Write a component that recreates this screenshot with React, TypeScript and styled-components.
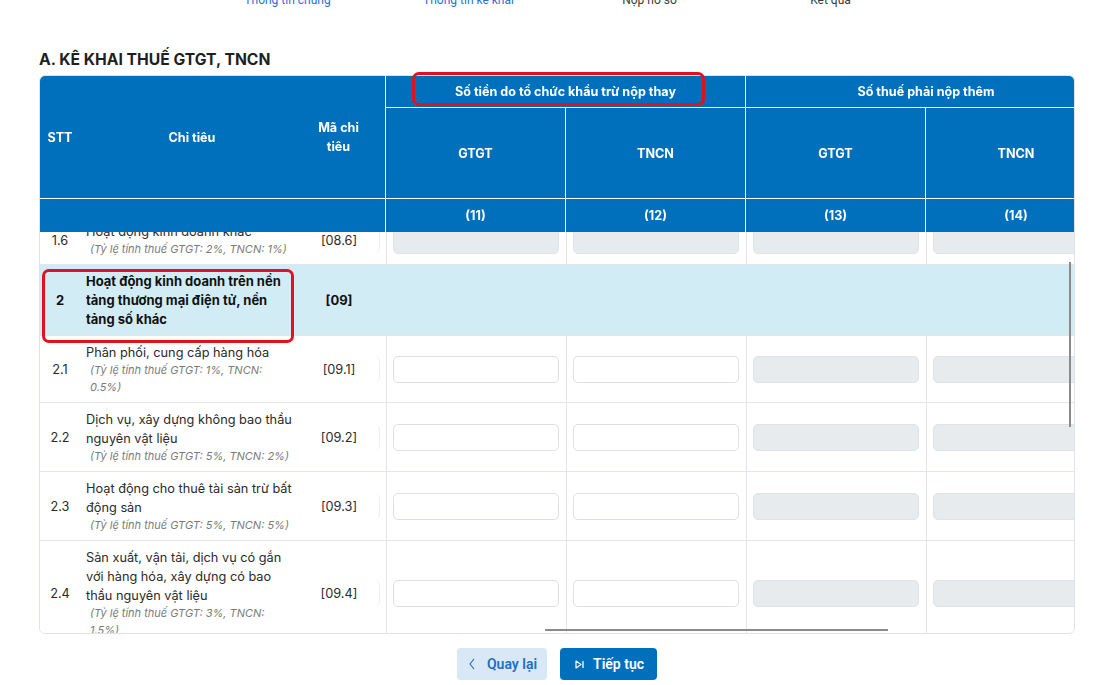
import React, { useEffect, useRef } from "react";
import styled, { createGlobalStyle } from "styled-components";
import { Check } from "lucide-react";

const GlobalStyle = createGlobalStyle`
  html, body {
    margin: 0;
    padding: 0;
    background: #fff;
  }
  body {
    font-family: Inter, "Noto Sans", sans-serif;
    color: #2b2b2b;
  }
`;

const BLUE = "#0070bd";
const LINE = "#e2e5e9";

const Page = styled.div`
  height: 100vh;
  overflow: hidden;
  padding: 0 40px 12px 39px;
  box-sizing: border-box;
`;

/* ---------- stepper ---------- */

const Stepper = styled.ol`
  list-style: none;
  margin: 0 auto;
  padding: 24px 0 0 4px;
  width: 724px;
  display: grid;
  grid-template-columns: repeat(4, 1fr);
  font-family: Roboto, "Liberation Sans", sans-serif;
`;

const Step = styled.li<{ $done: boolean; $first: boolean }>`
  position: relative;
  display: flex;
  flex-direction: column;
  align-items: center;
  &::before {
    content: "";
    display: ${(p) => (p.$first ? "none" : "block")};
    position: absolute;
    top: 14px;
    right: calc(50% + 18px);
    width: calc(100% - 36px);
    height: 2px;
    background: ${(p) => (p.$done ? "#2c6fdb" : "#d5d9df")};
  }
`;

const StepDot = styled.span<{ $done: boolean }>`
  width: 28px;
  height: 28px;
  border-radius: 50%;
  display: flex;
  align-items: center;
  justify-content: center;
  font-size: 13px;
  font-weight: 600;
  background: ${(p) => (p.$done ? "#2c6fdb" : "#fff")};
  color: ${(p) => (p.$done ? "#fff" : "#8a8f98")};
  border: 2px solid ${(p) => (p.$done ? "#2c6fdb" : "#d5d9df")};
  box-sizing: border-box;
`;

const StepLabel = styled.span<{ $done: boolean }>`
  margin-top: 8px;
  font-size: 12px;
  line-height: 16px;
  color: ${(p) => (p.$done ? "#2c6fdb" : "#3a3a3a")};
`;

/* ---------- declaration table ---------- */

const Section = styled.section`
  margin-top: 42px;
`;

const Title = styled.h2`
  margin: 0 0 5px;
  font-size: 15.7px;
  line-height: 20px;
  font-weight: 700;
  color: #1f1f1f;
`;

const Frame = styled.div`
  position: relative;
`;

const Scroller = styled.div`
  height: 559px;
  overflow: hidden;
  border: 1px solid #dfe2e7;
  border-radius: 6px;
  box-sizing: border-box;
`;

const Table = styled.table`
  border-collapse: separate;
  border-spacing: 0;
  table-layout: fixed;
  width: 1066px;
`;

const Head = styled.thead`
  position: sticky;
  top: 0;
  z-index: 2;
`;

const HeadRow = styled.tr<{ $h: number }>`
  height: ${(p) => p.$h}px;
`;

const Th = styled.th<{ $right?: boolean; $bottom?: boolean; $pad?: string }>`
  background: ${BLUE};
  color: #fff;
  font-size: 12.6px;
  line-height: 19px;
  font-weight: 700;
  text-align: center;
  vertical-align: middle;
  padding: ${(p) => p.$pad ?? "0 10px"};
  border-style: solid;
  border-color: #fff;
  border-width: 0 ${(p) => (p.$right ? 1 : 0)}px ${(p) => (p.$bottom ? 1 : 0)}px 0;
`;

const Row = styled.tr<{ $group?: boolean }>`
  background: ${(p) => (p.$group ? "#d2ecf6" : "#fff")};
`;

const Td = styled.td`
  border-bottom: 1px solid ${LINE};
  vertical-align: middle;
  padding: 7px 6px 6px;
  font-size: 12.75px;
  line-height: 19px;
`;

const NoCell = styled(Td)<{ $group?: boolean }>`
  text-align: center;
  padding-left: 0;
  padding-right: 0;
  font-size: ${(p) => (p.$group ? 13 : 12.75)}px;
  font-weight: ${(p) => (p.$group ? 700 : 400)};
  color: ${(p) => (p.$group ? "#111" : "#2b2b2b")};
`;

const NameCell = styled(Td)<{ $group?: boolean }>`
  padding-right: 8px;
  font-size: ${(p) => (p.$group ? 13 : 12.75)}px;
  font-weight: ${(p) => (p.$group ? 700 : 400)};
  color: ${(p) => (p.$group ? "#111" : "#2b2b2b")};
`;

const Note = styled.span`
  display: block;
  padding-left: 4px;
  font-size: 11px;
  line-height: 17px;
  font-style: italic;
  color: #7a7a7a;
`;

const CodeCell = styled(Td)<{ $group?: boolean }>`
  padding-left: 0;
  padding-right: 6px;
  text-align: center;
  font-size: ${(p) => (p.$group ? 13 : 12.75)}px;
  font-weight: ${(p) => (p.$group ? 700 : 400)};
  color: ${(p) => (p.$group ? "#111" : "#2b2b2b")};
`;

const CodeBox = styled.div<{ $framed: boolean }>`
  height: 27px;
  line-height: 27px;
  padding-right: 5px;
  border-right: 1px solid ${(p) => (p.$framed ? "#eceef1" : "transparent")};
  border-radius: 6px;
`;

const InputCell = styled(Td)`
  border-left: 1px solid ${LINE};
  padding-left: 6px;
  padding-right: 7px;
`;

const Field = styled.input`
  display: block;
  box-sizing: border-box;
  width: 100%;
  height: 27px;
  border: 1px solid #dcdfe4;
  border-radius: 5px;
  background: #fff;
  font: 13px Inter, sans-serif;
  padding: 0 8px;
  outline: none;
  &:disabled {
    background: #e8ebee;
    border-color: #dfe2e6;
  }
`;

const Highlight = styled.div<{ $x: number; $y: number; $w: number; $h: number }>`
  position: absolute;
  left: ${(p) => p.$x}px;
  top: ${(p) => p.$y}px;
  width: ${(p) => p.$w}px;
  height: ${(p) => p.$h}px;
  border: 3px solid #e3101f;
  border-radius: 7px;
  box-sizing: border-box;
  pointer-events: none;
  z-index: 5;
`;

const ThumbY = styled.div`
  position: absolute;
  right: 4px;
  top: 187px;
  width: 2px;
  height: 165px;
  background: #8a8a8a;
  z-index: 4;
`;

const ThumbX = styled.div`
  position: absolute;
  left: 506px;
  top: 554px;
  width: 343px;
  height: 2px;
  background: #8a8a8a;
  z-index: 4;
`;

/* ---------- footer buttons ---------- */

const Actions = styled.div`
  display: flex;
  justify-content: center;
  gap: 13px;
  margin-top: 14px;
`;

const Button = styled.button<{ $primary?: boolean }>`
  display: inline-flex;
  align-items: center;
  gap: ${(p) => (p.$primary ? 9 : 12)}px;
  height: 32px;
  padding: ${(p) => (p.$primary ? "0 13px 0 15px" : "0 10px 0 12px")};
  border: 0;
  border-radius: 4px;
  font-family: Roboto, "Liberation Sans", sans-serif;
  font-size: 14px;
  font-weight: 600;
  background: ${(p) => (p.$primary ? BLUE : "#d9e8f7")};
  color: ${(p) => (p.$primary ? "#fff" : "#1b6fc1")};
  cursor: pointer;
  svg {
    flex: none;
  }
`;

const BackIcon = () => (
  <svg width="6" height="12" viewBox="0 0 6 12" fill="none">
    <polyline points="5,1 1,6 5,11" stroke="currentColor" strokeWidth="1.1" />
  </svg>
);

const NextIcon = () => (
  <svg width="9" height="9" viewBox="0 0 9 9" fill="none">
    <polygon
      points="1,1 6,4.5 1,8"
      stroke="currentColor"
      strokeWidth="1.2"
      strokeLinejoin="round"
    />
    <line x1="8" y1="1" x2="8" y2="8" stroke="currentColor" strokeWidth="1.3" />
  </svg>
);

type Item = {
  no: string;
  name: string;
  note?: string;
  code: string;
  group?: boolean;
  locked?: boolean;
};

const items: Item[] = [
  { no: "1", name: "Hoạt động kinh doanh không qua nền tảng thương mại điện tử", code: "[08]", group: true },
  { no: "1.1", name: "Phân phối, cung cấp hàng hóa", note: "(Tỷ lệ tính thuế GTGT: 1%, TNCN: 0.5%)", code: "[08.1]", locked: true },
  { no: "1.2", name: "Dịch vụ, xây dựng không bao thầu nguyên vật liệu", note: "(Tỷ lệ tính thuế GTGT: 5%, TNCN: 2%)", code: "[08.2]", locked: true },
  { no: "1.3", name: "Hoạt động cho thuê tài sản trừ bất động sản", note: "(Tỷ lệ tính thuế GTGT: 5%, TNCN: 5%)", code: "[08.3]", locked: true },
  { no: "1.4", name: "Sản xuất, vận tải, dịch vụ có gắn với hàng hóa, xây dựng có bao thầu nguyên vật liệu", note: "(Tỷ lệ tính thuế GTGT: 3%, TNCN: 1.5%)", code: "[08.4]", locked: true },
  { no: "1.5", name: "Cho thuê bất động sản", note: "(Tỷ lệ tính thuế TNCN: 5%)", code: "[08.5]", locked: true },
  { no: "1.6", name: "Hoạt động kinh doanh khác", note: "(Tỷ lệ tính thuế GTGT: 2%, TNCN: 1%)", code: "[08.6]", locked: true },
  { no: "2", name: "Hoạt động kinh doanh trên nền tảng thương mại điện tử, nền tảng số khác", code: "[09]", group: true },
  { no: "2.1", name: "Phân phối, cung cấp hàng hóa", note: "(Tỷ lệ tính thuế GTGT: 1%, TNCN: 0.5%)", code: "[09.1]" },
  { no: "2.2", name: "Dịch vụ, xây dựng không bao thầu nguyên vật liệu", note: "(Tỷ lệ tính thuế GTGT: 5%, TNCN: 2%)", code: "[09.2]" },
  { no: "2.3", name: "Hoạt động cho thuê tài sản trừ bất động sản", note: "(Tỷ lệ tính thuế GTGT: 5%, TNCN: 5%)", code: "[09.3]" },
  { no: "2.4", name: "Sản xuất, vận tải, dịch vụ có gắn với hàng hóa, xây dựng có bao thầu nguyên vật liệu", note: "(Tỷ lệ tính thuế GTGT: 3%, TNCN: 1.5%)", code: "[09.4]" },
  { no: "2.5", name: "Hoạt động kinh doanh khác", note: "(Tỷ lệ tính thuế GTGT: 2%, TNCN: 1%)", code: "[09.5]" },
];

const steps = [
  { label: "Thông tin chung", done: true },
  { label: "Thông tin kê khai", done: true },
  { label: "Nộp hồ sơ", done: false },
  { label: "Kết quả", done: false },
];

const App = () => {
  const pageRef = useRef<HTMLDivElement>(null);
  const labelRef = useRef<HTMLSpanElement>(null);
  const scrollRef = useRef<HTMLDivElement>(null);
  const headRef = useRef<HTMLTableSectionElement>(null);
  const groupRef = useRef<HTMLTableRowElement>(null);

  // keep the view on group 2 of the form, with the last line of group 1 peeking under the header
  useEffect(() => {
    const page = pageRef.current;
    const label = labelRef.current;
    if (page && label) {
      page.scrollTop =
        label.getBoundingClientRect().top - page.getBoundingClientRect().top + 8;
    }
    const body = scrollRef.current;
    const head = headRef.current;
    const group = groupRef.current;
    if (body && head && group) {
      const rel =
        group.getBoundingClientRect().top - body.getBoundingClientRect().top - body.clientTop;
      body.scrollTop = rel - head.offsetHeight - 33;
    }
  }, []);

  return (
    <>
      <GlobalStyle />
      <Page ref={pageRef}>
        <Stepper>
          {steps.map((s, i) => (
            <Step key={s.label} $done={s.done} $first={i === 0}>
              <StepDot $done={s.done}>
                {s.done ? <Check size={14} strokeWidth={3} /> : i + 1}
              </StepDot>
              <StepLabel $done={s.done} ref={i === 0 ? labelRef : undefined}>
                {s.label}
              </StepLabel>
            </Step>
          ))}
        </Stepper>

        <Section>
          <Title>A. KÊ KHAI THUẾ GTGT, TNCN</Title>
          <Frame>
            <Scroller ref={scrollRef}>
              <Table>
                <colgroup>
                  <col style={{ width: 40 }} />
                  <col style={{ width: 224 }} />
                  <col style={{ width: 82 }} />
                  <col style={{ width: 180 }} />
                  <col style={{ width: 180 }} />
                  <col style={{ width: 180 }} />
                  <col style={{ width: 180 }} />
                </colgroup>
                <Head ref={headRef}>
                  <HeadRow $h={32}>
                    <Th rowSpan={2} $bottom $pad="0">
                      STT
                    </Th>
                    <Th rowSpan={2} $bottom>
                      Chỉ tiêu
                    </Th>
                    <Th rowSpan={2} $bottom $right $pad="0 16px 0 4px">
                      Mã chỉ tiêu
                    </Th>
                    <Th colSpan={2} $bottom $right>
                      Số tiền do tổ chức khẩu trừ nộp thay
                    </Th>
                    <Th colSpan={2} $bottom>
                      Số thuế phải nộp thêm
                    </Th>
                  </HeadRow>
                  <HeadRow $h={91}>
                    <Th $bottom $right>GTGT</Th>
                    <Th $bottom $right>TNCN</Th>
                    <Th $bottom $right>GTGT</Th>
                    <Th $bottom>TNCN</Th>
                  </HeadRow>
                  <HeadRow $h={33}>
                    <Th colSpan={3} $right />
                    <Th $right>(11)</Th>
                    <Th $right>(12)</Th>
                    <Th $right>(13)</Th>
                    <Th>(14)</Th>
                  </HeadRow>
                </Head>
                <tbody>
                  {items.map((it) => (
                    <Row
                      key={it.no}
                      $group={it.group}
                      ref={it.no === "2" ? groupRef : undefined}
                    >
                      <NoCell $group={it.group}>{it.no}</NoCell>
                      <NameCell $group={it.group}>
                        {it.name}
                        {it.note && <Note>{it.note}</Note>}
                      </NameCell>
                      <CodeCell $group={it.group}>
                        <CodeBox $framed={!it.group}>{it.code}</CodeBox>
                      </CodeCell>
                      {it.group ? (
                        <Td colSpan={4} />
                      ) : (
                        <>
                          <InputCell>
                            <Field disabled={it.locked} />
                          </InputCell>
                          <InputCell>
                            <Field disabled={it.locked} />
                          </InputCell>
                          <InputCell>
                            <Field disabled />
                          </InputCell>
                          <InputCell>
                            <Field disabled />
                          </InputCell>
                        </>
                      )}
                    </Row>
                  ))}
                </tbody>
              </Table>
            </Scroller>
            <ThumbY />
            <ThumbX />
            <Highlight $x={373} $y={-3} $w={293} $h={34} />
            <Highlight $x={3} $y={194} $w={252} $h={74} />
          </Frame>
          <Actions>
            <Button>
              <BackIcon />
              Quay lại
            </Button>
            <Button $primary>
              <NextIcon />
              Tiếp tục
            </Button>
          </Actions>
        </Section>
      </Page>
    </>
  );
};

export default App;
